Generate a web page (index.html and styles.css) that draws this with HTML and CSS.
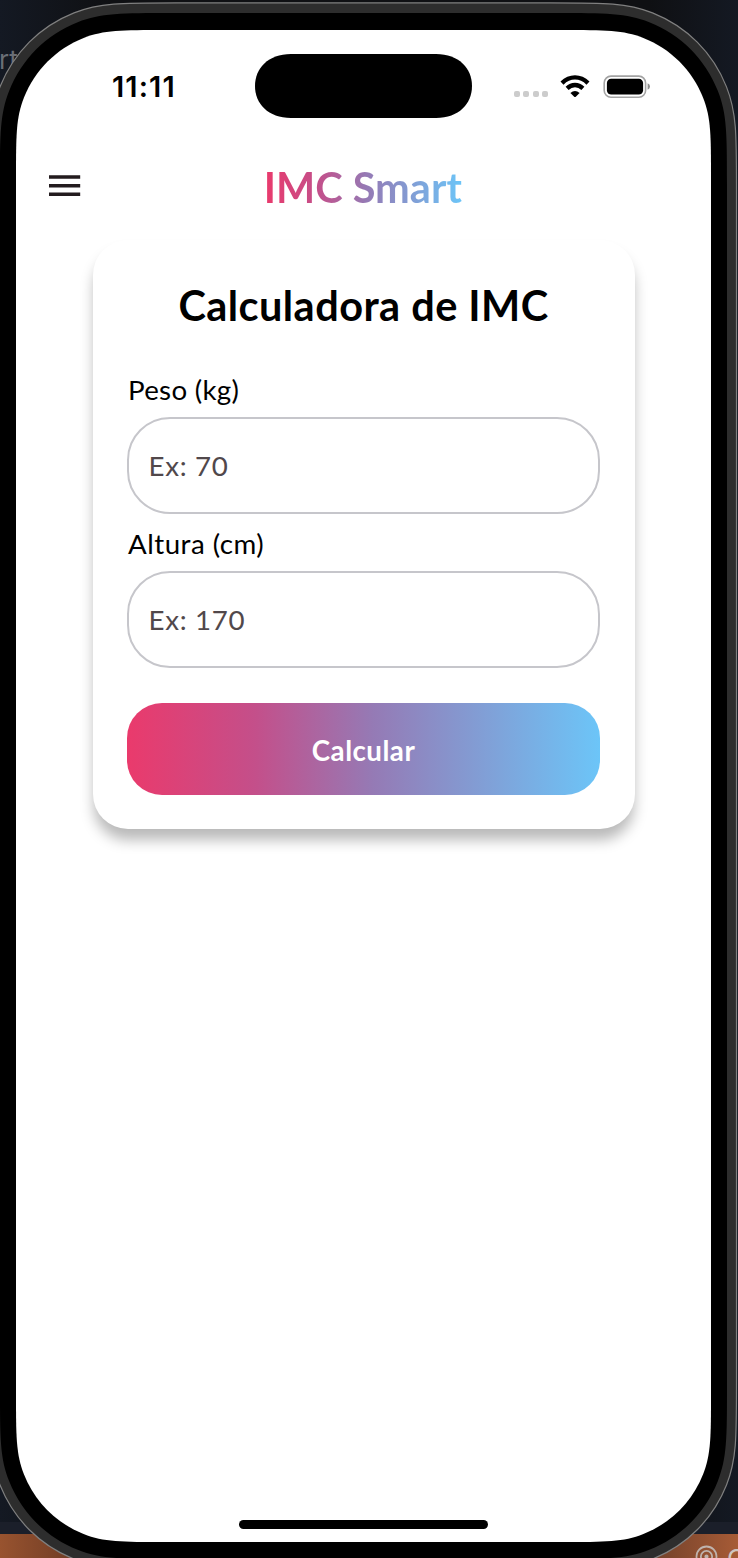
FILE: index.html
```html
<!DOCTYPE html>
<html lang="pt-BR">
<head>
<meta charset="utf-8">
<title>IMC Smart</title>
<link rel="stylesheet" href="styles.css">
</head>
<body>
<div class="desktop">
  <span class="desktop-label">rt</span>
  <div class="desktop-bar">
    <svg class="bar-icon" viewBox="0 0 24 24"><circle cx="12" cy="12" r="9.6"/><circle cx="12" cy="12" r="5.4"/><circle class="dot" cx="12" cy="12" r="2"/></svg>
    <span class="bar-text">G</span>
  </div>
  <svg class="frame" viewBox="0 0 738 1558">
    <path class="frame-edge" d="M176.4 2.9H550.1c55.9 0 77.3 0 102.4 10 34.2 13.6 60.4 39.8 74 74 10 25.1 10 46.5 10 102.4V1382.6c0 55.9 0 77.3-10 102.4-13.6 34.2-39.8 60.4-74 74-25.1 10-46.5 10-102.4 10H176.4c-55.9 0-77.3 0-102.4-10-34.2-13.6-60.4-39.8-74-74-10-25.1-10-46.5-10-102.4V189.3c0-55.9 0-77.3 10-102.4 13.6-34.2 39.8-60.4 74-74 25.1-10 46.5-10 102.4-10z"/>
    <path d="M172.4 13H554.6c51.7 0 71.5 0 94.7 9.2 31.6 12.5 56 36.9 68.5 68.5 9.2 23.2 9.2 43 9.2 94.7V1386.6c0 51.7 0 71.5-9.2 94.7-12.5 31.6-36.9 56-68.5 68.5-23.2 9.2-43 9.2-94.7 9.2H172.4c-51.7 0-71.5 0-94.7-9.2-31.6-12.5-56-36.9-68.5-68.5-9.2-23.2-9.2-43-9.2-94.7V185.4c0-51.7 0-71.5 9.2-94.7 12.5-31.6 36.9-56 68.5-68.5 23.2-9.2 43-9.2 94.7-9.2z"/>
    <path class="frame-screen" d="M166 30H561c45 0 62.2 0 82.4 8 27.5 10.9 48.7 32.1 59.6 59.6 8 20.2 8 37.4 8 82.4V1392c0 45 0 62.2-8 82.4-10.9 27.5-32.1 48.7-59.6 59.6-20.2 8-37.4 8-82.4 8H166c-45 0-62.2 0-82.4-8-27.5-10.9-48.7-32.1-59.6-59.6-8-20.2-8-37.4-8-82.4V180c0-45 0-62.2 8-82.4 10.9-27.5 32.1-48.7 59.6-59.6 20.2-8 37.4-8 82.4-8z"/>
  </svg>
  <main class="screen">
    <header class="status">
      <span class="time">11:11</span>
      <svg class="island" viewBox="0 0 217 64"><path d="M36 0H181C204 0 217 14.500 217 32S204 64 181 64H36C13 64 0 49.500 0 32S13 0 36 0z"/></svg>
      <div class="indicators">
        <span class="cell"><i></i><i></i><i></i><i></i></span>
        <svg class="wifi" viewBox="0 0 30 23"><path class="arc" d="M2 8.100Q7.800 2.400 15 2.400T28 8.100M7.100 13.400Q10.600 10 15 10T22.900 13.400"/><path d="M10.400 17.900Q15 14 19.600 17.900L15.800 21.700Q15 22.500 14.200 21.700z"/></svg>
        <svg class="battery" viewBox="0 0 48 24"><rect class="shell" x="1.2" y="1.1" width="41.4" height="21.2" rx="6.8"/><rect x="3.9" y="3.8" width="36.2" height="15.800" rx="4.3"/><path class="cap" d="M44.6 8.2Q47 9.3 47 11.5T44.6 14.8z"/></svg>
      </div>
    </header>
    <nav class="appbar">
      <svg class="menu" viewBox="0 0 32 22"><path d="M0 2.1H31.2M0 10.7H31.2M0 19.3H31.2"/></svg>
      <h1 class="brand">IMC Smart</h1>
    </nav>
    <section class="card">
      <h2 class="title">Calculadora de IMC</h2>
      <div class="label">Peso (kg)</div>
      <div class="field">Ex: 70</div>
      <div class="label wide">Altura (cm)</div>
      <div class="field">Ex: 170</div>
      <div class="button">Calcular</div>
    </section>
    <div class="home"></div>
  </main>
</div>
</body>
</html>
```
FILE: styles.css
```css
* { box-sizing: border-box; }
body { margin: 0; font-family: Lato, sans-serif; }
h1, h2 { margin: 0; }
svg { display: block; flex: none; }
.desktop {
  position: relative; width: 738px; height: 1558px; overflow: hidden;
  background: linear-gradient(90deg, #141923 0, #0f1013 110px, #0f1013 650px, #141923 738px);
}
.desktop-label {
  position: absolute; left: -1px; top: 44px;
  font: 26px/32px Inter, sans-serif; color: #6a6e76;
}
.desktop-bar {
  position: absolute; left: 0; right: 0; top: 1522px; height: 36px;
  border-top: 12px solid #1b1f2a;
  background: linear-gradient(90deg, #98532f, #6c3a24 80px, #70402a 650px, #a75b36 738px);
}
.bar-icon { position: absolute; left: 694px; top: 10px; width: 25px; height: 25px; fill: none; stroke: #bfb3ad; stroke-width: 1.7; }
.bar-icon .dot { fill: #bfb3ad; stroke: none; }
.bar-text { position: absolute; left: 727px; top: 9px; font: 26px/32px Inter, sans-serif; color: #cfc5c0; }
.frame { position: absolute; inset: 0; width: 738px; height: 1558px; }
.frame-edge { fill: #2d2d2d; stroke: #808080; stroke-width: 1.2; }
.frame-screen { fill: #fff; }
.screen {
  position: relative; display: flex; flex-direction: column;
  width: 695px; height: 1512px; margin: 30px 0 0 16px;
}
.status { position: relative; display: flex; justify-content: space-between; height: 113px; padding: 0 60px 0 96px; }
.time { padding-top: 39px; font: 600 29px/36px Inter, sans-serif; letter-spacing: 1.1px; color: #000; }
.island { position: absolute; left: 239px; top: 24px; width: 217px; height: 64px; }
.indicators { display: flex; align-items: flex-start; padding-top: 45px; }
.cell { display: flex; gap: 3.4px; margin: 16px 12px 0 0; }
.cell i { width: 6px; height: 6px; border-radius: 2px; background: #ccc; }
.wifi { width: 30px; height: 23px; margin-right: 13px; }
.wifi .arc { fill: none; stroke: #000; stroke-width: 4.3; }
.battery { width: 48px; height: 24px; }
.battery .shell { fill: none; stroke: #a3a3a3; stroke-width: 1.6; }
.battery .cap { fill: #8f8f8f; }
.appbar { display: flex; align-items: center; height: 97px; padding-left: 32.7px; }
.menu { width: 32px; height: 22px; margin-bottom: 11px; }
.menu path { stroke: #231b1e; stroke-width: 3.5; }
.brand {
  margin: 0 0 9px 183px; font-size: 41.5px; line-height: 54px; font-weight: 700;
  color: transparent; background: linear-gradient(90deg, #ea3a6c, #c44f8a 27%, #957ab5 52%, #6cc5f8);
  -webkit-background-clip: text; background-clip: text; white-space: nowrap;
}
.card {
  display: flex; flex-direction: column; align-self: center;
  width: 542px; height: 589px; padding: 35px 34.5px; border-radius: 35px;
  background: #fff; box-shadow: 0 12px 14px -1px rgba(0, 0, 0, .28);
}
.title { font-size: 41.5px; line-height: 60px; font-weight: 700; letter-spacing: .45px; text-align: center; white-space: nowrap; }
.label { margin: 12.5px 0 10.5px 1px; font-size: 27.7px; line-height: 34px; letter-spacing: .3px; }
.label.wide { letter-spacing: .5px; }
.title + .label { margin-top: 37.5px; }
.field {
  flex: none; height: 97px; padding-left: 19.5px; border: 2px solid #c6c6cb; border-radius: 43px;
  font-size: 27.7px; line-height: 94px; letter-spacing: .7px; color: #51484b;
}
.button {
  flex: none; height: 92px; margin-top: 34.5px; border-radius: 35px;
  background: linear-gradient(90deg, #ea3a6c, #c44f8a 27%, #957ab5 52%, #6cc5f8);
  font-size: 27.7px; line-height: 95px; font-weight: 700; letter-spacing: .5px; text-align: center; color: #fff;
}
.home { width: 249px; height: 9px; margin: auto auto 13.500px; border-radius: 5px; background: #000; }
```
